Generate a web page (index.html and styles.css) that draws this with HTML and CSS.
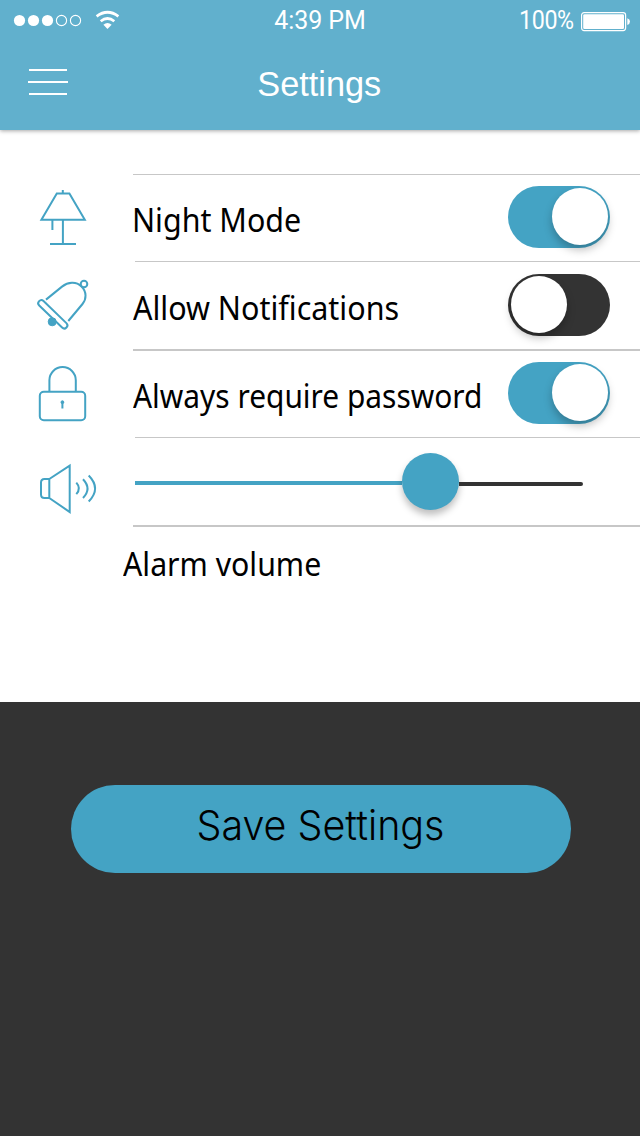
FILE: index.html
```html
<!DOCTYPE html>
<html lang="en">
<head>
<meta charset="utf-8">
<title>Settings</title>
<link rel="stylesheet" href="styles.css">
</head>
<body>
<div class="screen">
  <header class="header">
    <div class="status">
      <svg class="signal" viewBox="0 0 130 40" fill="#fff">
        <circle cx="19.5" cy="20.5" r="5.6"/><circle cx="33.5" cy="20.5" r="5.6"/><circle cx="47.5" cy="20.5" r="5.6"/>
        <g fill="none" stroke="#fff" stroke-width="1.1"><circle cx="61.5" cy="20.5" r="5.1"/><circle cx="75.5" cy="20.5" r="5.1"/></g>
        <g fill="none" stroke="#fff" stroke-width="2.7"><path d="M96.6 16.3Q107.5 8.2 118.4 16.3"/><path d="M100.7 21.3Q107.5 15.7 114.3 21.3"/></g>
        <path d="M103.4 24.8Q107.5 21.3 111.6 24.8L107.5 29z"/>
      </svg>
      <span class="time">4:39 PM</span>
      <div class="power">
        <span class="percent">100%</span>
        <svg class="battery" viewBox="0 0 50 20"><rect x=".6" y=".6" width="44" height="18" rx="2.5" fill="none" stroke="#fff" stroke-width="1.2"/><rect x="2.2" y="2.2" width="40.8" height="14.8" rx="1.3" fill="#fff"/><path d="M46.3 6.2Q49 7 49 9.6T46.3 13z" fill="#fff"/></svg>
      </div>
    </div>
    <nav class="nav">
      <svg class="menu" viewBox="0 0 40 28" stroke="#fff" stroke-width="2"><path d="M1 2H39M0 14H40M1 26H39"/></svg>
      <h1 class="title"><span>Settings</span></h1>
    </nav>
  </header>

  <main class="settings">
    <section class="row">
      <svg class="icon" viewBox="0 174 133 88"><path d="M62.8 190V193.5M56.8 193.5H69.4L84.8 219.8H41.4ZM52.4 220V230M62.9 220V244M50 244H76"/></svg>
      <div class="cell thin wide">
        <span class="label night">Night Mode</span>
        <span class="switch on"><i class="knob"></i></span>
      </div>
    </section>
    <section class="row">
      <svg class="icon" viewBox="0 261 133 88"><circle cx="84" cy="284" r="3.3"/><rect x="33.8" y="311.2" width="38" height="6.2" rx="3.1" transform="rotate(44 52.8 314.3)"/><path d="M46 299.6L62 286.6C68 282 76 281 81.5 286.5C86.8 291.8 86.6 299 82.5 304L68.3 321"/><circle class="solid" cx="52.2" cy="321.8" r="4"/></svg>
      <div class="cell thin">
        <span class="label notify">Allow Notifications</span>
        <span class="switch"><i class="knob"></i></span>
      </div>
    </section>
    <section class="row">
      <svg class="icon" viewBox="0 349 133 88"><rect x="39.8" y="391.7" width="45.4" height="28.6" rx="4"/><path d="M49.4 391V380.3A13.2 13.2 0 0 1 75.8 380.3V391M62.4 402V408.5"/><circle class="solid" cx="62.4" cy="402.2" r="1.4"/></svg>
      <div class="cell thick">
        <span class="label password">Always require password</span>
        <span class="switch on"><i class="knob"></i></span>
      </div>
    </section>
    <section class="row">
      <svg class="icon" viewBox="0 437 133 88"><path d="M49.3 479H44.5Q41 479 41 482.5V494.5Q41 498 44.5 498H49.3ZM49.3 479L69.7 465.6V512L49.3 498"/><path d="M76.3 482.7Q81.5 488.5 76.3 494.2M83 479.3Q92 488.7 83 498M88.7 475.5Q101.5 488.5 88.7 501.5"/></svg>
      <div class="cell thin slider">
        <span class="fill"></span><span class="handle"></span><span class="rest"></span>
      </div>
    </section>
    <section class="caption">
      <div class="rule"></div>
      <span class="label volume">Alarm volume</span>
    </section>
  </main>

  <footer class="footer">
    <button class="save"><span>Save Settings</span></button>
  </footer>
</div>
</body>
</html>
```
FILE: styles.css
```css
* { box-sizing: border-box; }
body { margin: 0; }
.screen { width: 640px; height: 1136px; display: flex; flex-direction: column; background: #fff; overflow: hidden; font-family: "Noto Sans", sans-serif; color: #000; }
.header { height: 130px; flex: none; background: #61b0cd; color: #fff; box-shadow: 0 1px 4px rgba(0,0,0,.35); }
.status { height: 40px; display: grid; grid-template-columns: 130px 1fr 130px; font: 400 25px/40px Roboto, sans-serif; }
.signal { width: 130px; height: 40px; }
.time { text-align: center; font-size: 25px; line-height: 42px; letter-spacing: -.1px; }
.power { display: flex; align-items: center; padding-left: 9px; }
.percent { width: 62px; font-size: 25px; line-height: 42px; transform: scaleX(.93); transform-origin: 0 50%; letter-spacing: -.4px; }
.battery { width: 50px; height: 20px; margin-top: 1px; }
.nav { height: 90px; display: grid; grid-template-columns: 40px 1fr 40px; padding: 0 28px; }
.menu { width: 40px; height: 28px; margin-top: 28px; }
.title { margin: 0; text-align: center; font: 400 35px/88px "Liberation Sans", sans-serif; white-space: nowrap; }
.title span { display: inline-block; transform: translateX(-1px) scaleX(.98); }
.settings { height: 572px; flex: none; padding-top: 44px; }
.row { height: 88px; display: grid; grid-template-columns: 133px 1fr; }
.row:first-child { height: 87px; }
.icon { width: 133px; height: 88px; fill: none; stroke: #44a3c4; stroke-width: 2; }
.icon .solid { fill: #44a3c4; stroke-width: 1; }
.cell { display: flex; justify-content: space-between; align-items: flex-start; padding-right: 30px; border-top: 1px solid #c7c7c7; margin-left: 2px; height: 88px; }
.cell.wide, .cell.thick { margin-left: 0; }
.cell.thick { border-top-width: 2px; }
.label { display: block; width: max-content; font-size: 32px; line-height: 44px; white-space: nowrap; transform-origin: 0 50%; }
.cell .label { width: 0; }
.night { margin-top: 23px; margin-left: -1px; transform: scaleX(.95); }
.notify { margin-top: 24px; margin-left: -2px; transform: scaleX(.952); }
.password { margin-top: 23px; transform: scaleX(.934); }
.switch { width: 102px; height: 62px; border-radius: 31px; background: #333; padding: 2px 3px; margin-top: 12px; display: flex; }
.wide .switch { margin-top: 11px; }
.thick .switch { margin-top: 11px; }
.switch.on { background: #44a3c4; padding: 2px; justify-content: flex-end; }
.knob { width: 56px; height: 57px; border-radius: 50%; background: #fff; box-shadow: 0 5px 9px rgba(0,0,0,.25); }
.slider { justify-content: flex-start; }
.fill { width: 267px; height: 4px; margin-top: 43px; background: #44a3c4; }
.handle { width: 57px; height: 57px; margin-top: 15px; border-radius: 50%; background: #44a3c4; box-shadow: 0 5px 7px rgba(0,0,0,.25); }
.rest { width: 124px; height: 4px; margin-top: 44px; background: #333; border-radius: 0 2px 2px 0; }
.rule { height: 2px; margin-left: 133px; background: #c7c7c7; }
.volume { margin: 15px 0 0 123px; transform: scaleX(.945); }
.footer { flex: 1; background: #333; padding: 83px 69px 0 71px; }
.save { display: block; width: 100%; height: 88px; padding: 0 0 8px; border: 0; border-radius: 44px; background: #44a3c4; color: #000; font: 300 41.5px/80px Inter, "Liberation Sans", sans-serif; white-space: nowrap; }
.save span { display: inline-block; transform: translateX(-1px) scaleX(.95); }
```
